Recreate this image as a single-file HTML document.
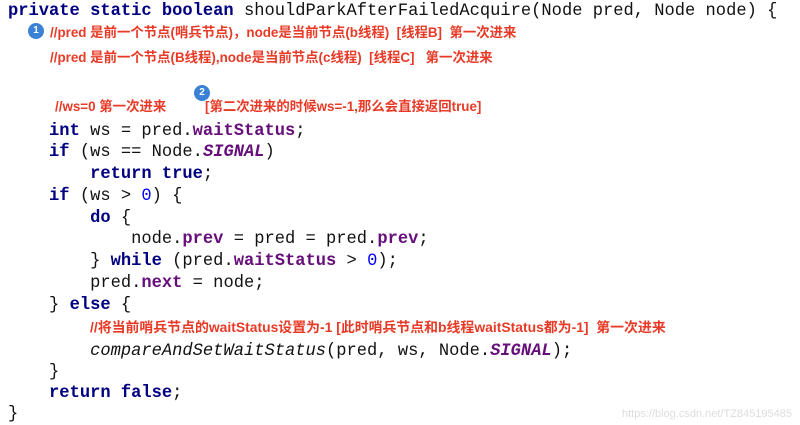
<!DOCTYPE html>
<html><head><meta charset="utf-8"><style>
body{margin:0;width:800px;height:425px;background:#fff;position:relative;overflow:hidden}
.c{position:absolute;left:8px;font-family:"Liberation Mono","DejaVu Sans Mono",monospace;font-size:17.1px;color:#111;white-space:pre;line-height:20px}
.k{color:#000080;font-weight:bold}
.f{color:#660e7a;font-weight:bold}
.s{color:#660e7a;font-weight:bold;font-style:italic}
.n{color:#0000ff}
.i{font-style:italic}
.r{position:absolute;font-family:"Liberation Sans","Noto Sans CJK SC",sans-serif;font-size:13.4px;font-weight:bold;color:#e83a26;white-space:pre;line-height:16px}
.b{position:absolute;width:16px;height:16px;border-radius:50%;background:#3b82d6;color:#fff;font:bold 10px "Liberation Sans",sans-serif;text-align:center;line-height:16px}
.w{position:absolute;right:8px;top:408px;font:11px "Liberation Sans",sans-serif;color:#ddd}
</style></head><body>
<div class="c" style="top:2px"><span class="k">private static boolean</span> shouldParkAfterFailedAcquire(Node pred, Node node) {</div>
<div class="b" style="left:28px;top:23px">1</div>
<div class="r" style="left:50px;top:25px">//pred 是前一个节点(哨兵节点)，node是当前节点(b线程)  [线程B]  第一次进来</div>
<div class="r" style="left:50px;top:50px">//pred 是前一个节点(B线程),node是当前节点(c线程)  [线程C]   第一次进来</div>
<div class="b" style="left:194px;top:85px">2</div>
<div class="r" style="left:55px;top:99px">//ws=0 第一次进来</div>
<div class="r" style="left:205px;top:99px">[第二次进来的时候ws=-1,那么会直接返回true]</div>
<div class="c" style="top:122px">    <span class="k">int</span> ws = pred.<span class="f">waitStatus</span>;</div>
<div class="c" style="top:143px">    <span class="k">if</span> (ws == Node.<span class="s">SIGNAL</span>)</div>
<div class="c" style="top:165px">        <span class="k">return true</span>;</div>
<div class="c" style="top:187px">    <span class="k">if</span> (ws &gt; <span class="n">0</span>) {</div>
<div class="c" style="top:209px">        <span class="k">do</span> {</div>
<div class="c" style="top:230px">            node.<span class="f">prev</span> = pred = pred.<span class="f">prev</span>;</div>
<div class="c" style="top:252px">        } <span class="k">while</span> (pred.<span class="f">waitStatus</span> &gt; <span class="n">0</span>);</div>
<div class="c" style="top:274px">        pred.<span class="f">next</span> = node;</div>
<div class="c" style="top:296px">    } <span class="k">else</span> {</div>
<div class="r" style="left:90px;top:319px;font-size:13.9px">//将当前哨兵节点的waitStatus设置为-1 [此时哨兵节点和b线程waitStatus都为-1]  第一次进来</div>
<div class="c" style="top:342px">        <span class="i">compareAndSetWaitStatus</span>(pred, ws, Node.<span class="s">SIGNAL</span>);</div>
<div class="c" style="top:363px">    }</div>
<div class="c" style="top:384px">    <span class="k">return false</span>;</div>
<div class="c" style="top:405px">}</div>
<div class="w">https://blog.csdn.net/TZ845195485</div>
</body></html>
